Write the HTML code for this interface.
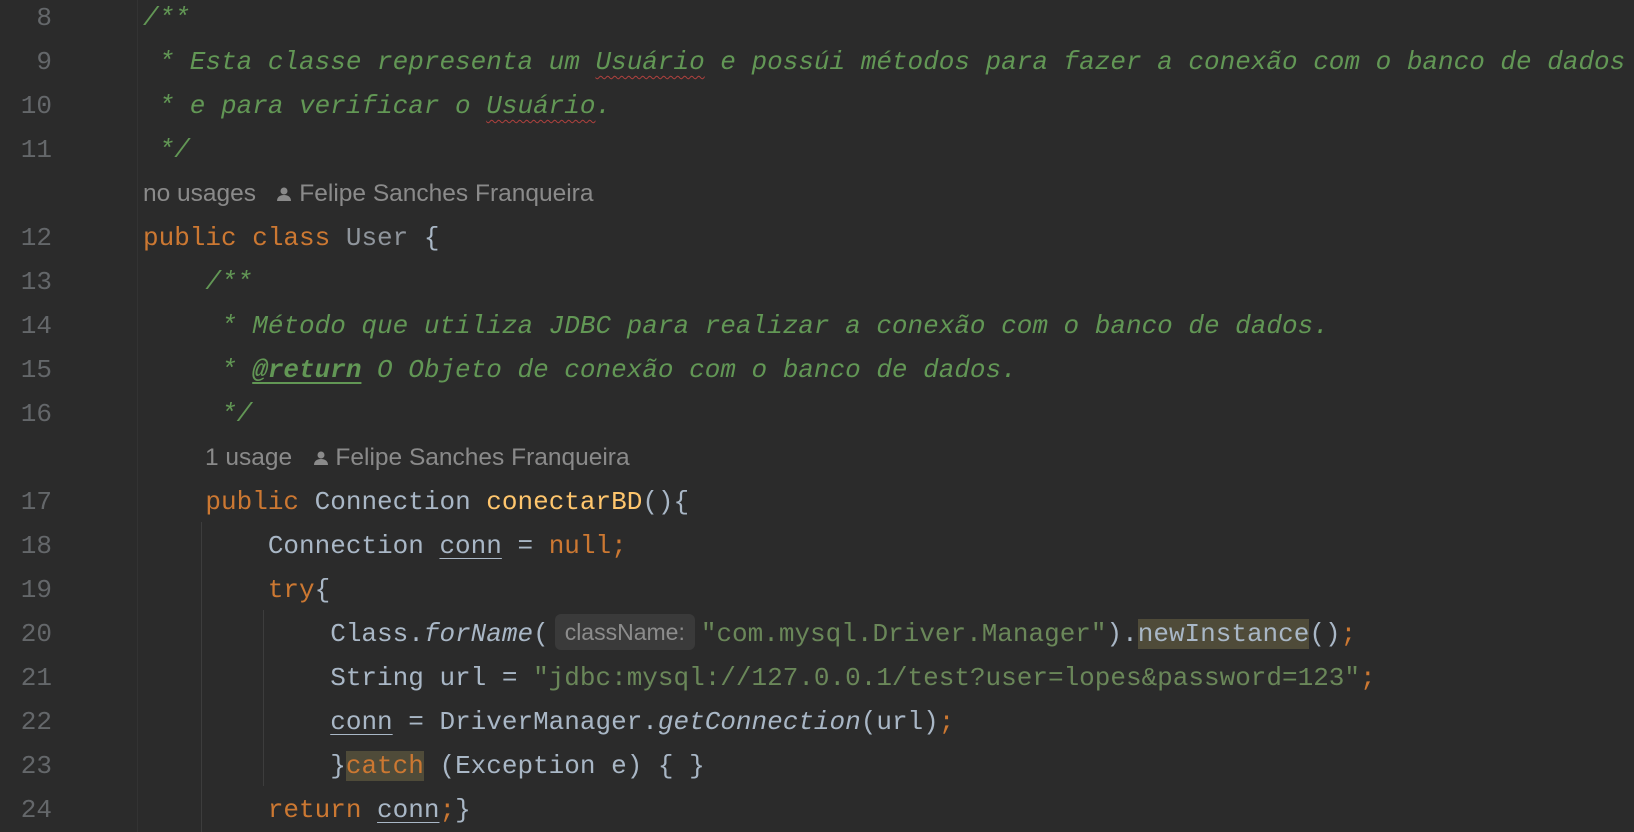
<!DOCTYPE html>
<html><head><meta charset="utf-8"><style>
html,body{margin:0;padding:0;background:#2b2b2b;width:1634px;height:832px;overflow:hidden}
.r{position:absolute;left:0;height:44px;line-height:44px;white-space:pre;font-family:"Liberation Mono",monospace;font-size:26px;color:#a9b7c6}
.n{position:absolute;left:0;width:52px;text-align:right;color:#64676a}
.c{position:absolute;left:143px}
.cm{color:#629755;font-style:italic}
.k{color:#cc7832}
.s{color:#6a8759}
.f{color:#ffc66d}
.i{font-style:italic}
.u{text-decoration:underline;text-decoration-color:#a9b7c6;text-underline-offset:5px;text-decoration-thickness:1px}
.sp{text-decoration:underline wavy #b0413e;text-underline-offset:6px;text-decoration-thickness:1px}
.tag{font-weight:bold;text-decoration:underline;text-underline-offset:5px}
.hl{background:#4f4b39}
.h{font-family:"Liberation Sans",sans-serif;font-size:24.5px;color:#8a8a8a;font-style:normal}
.ph{display:inline-block;font-family:"Liberation Sans",sans-serif;font-size:23px;color:#8c8c8c;background:#3a3a3a;border-radius:6px;line-height:36px;padding:0 10px;margin:0 6px 0 6px;vertical-align:1px}
.g{position:absolute;width:1px;background:#3d3d3d}
</style></head><body>
<div class="g" style="left:137px;top:0;height:832px;background:#333"></div>
<div class="g" style="left:201px;top:522px;height:310px"></div>
<div class="g" style="left:263px;top:610px;height:176px"></div>

<div class="r" style="top:-4px"><span class="n">8</span><span class="c cm">/**</span></div>
<div class="r" style="top:40px"><span class="n">9</span><span class="c cm"> * Esta classe representa um <span class="sp">Usuário</span> e possúi métodos para fazer a conexão com o banco de dados</span></div>
<div class="r" style="top:84px"><span class="n">10</span><span class="c cm"> * e para verificar o <span class="sp">Usuário</span>.</span></div>
<div class="r" style="top:128px"><span class="n">11</span><span class="c cm"> */</span></div>
<div class="r" style="top:172px"><span class="c h">no usages   <svg width="16" height="16" viewBox="0 0 16 16" style="vertical-align:-1px"><circle cx="8" cy="5" r="3.5" fill="#8a8a8a"/><path d="M1 15c0-4 3-6 7-6s7 2 7 6z" fill="#8a8a8a"/></svg> Felipe Sanches Franqueira</span></div>
<div class="r" style="top:216px"><span class="n">12</span><span class="c"><span class="k">public class </span><span style="color:#8f959c">User</span> {</span></div>
<div class="r" style="top:260px"><span class="n">13</span><span class="c cm">    /**</span></div>
<div class="r" style="top:304px"><span class="n">14</span><span class="c cm">     * Método que utiliza JDBC para realizar a conexão com o banco de dados.</span></div>
<div class="r" style="top:348px"><span class="n">15</span><span class="c cm">     * <span class="tag">@return</span> O Objeto de conexão com o banco de dados.</span></div>
<div class="r" style="top:392px"><span class="n">16</span><span class="c cm">     */</span></div>
<div class="r" style="top:436px"><span class="c h" style="left:205px">1 usage   <svg width="16" height="16" viewBox="0 0 16 16" style="vertical-align:-1px"><circle cx="8" cy="5" r="3.5" fill="#8a8a8a"/><path d="M1 15c0-4 3-6 7-6s7 2 7 6z" fill="#8a8a8a"/></svg> Felipe Sanches Franqueira</span></div>
<div class="r" style="top:480px"><span class="n">17</span><span class="c">    <span class="k">public </span>Connection <span class="f">conectarBD</span>(){</span></div>
<div class="r" style="top:524px"><span class="n">18</span><span class="c">        Connection <span class="u">conn</span> = <span class="k">null;</span></span></div>
<div class="r" style="top:568px"><span class="n">19</span><span class="c">        <span class="k">try</span>{</span></div>
<div class="r" style="top:612px"><span class="n">20</span><span class="c">            Class.<span class="i">forName</span>(<span class="ph">className:</span><span class="s">"com.mysql.Driver.Manager"</span>).<span class="hl">newInstance</span>()<span class="k">;</span></span></div>
<div class="r" style="top:656px"><span class="n">21</span><span class="c">            String url = <span class="s">"jdbc:mysql://127.0.0.1/test?user=lopes&amp;password=123"</span><span class="k">;</span></span></div>
<div class="r" style="top:700px"><span class="n">22</span><span class="c">            <span class="u">conn</span> = DriverManager.<span class="i">getConnection</span>(url)<span class="k">;</span></span></div>
<div class="r" style="top:744px"><span class="n">23</span><span class="c">            }<span class="k hl">catch</span> (Exception e) { }</span></div>
<div class="r" style="top:788px"><span class="n">24</span><span class="c">        <span class="k">return </span><span class="u">conn</span><span class="k">;</span>}</span></div>
</body></html>
